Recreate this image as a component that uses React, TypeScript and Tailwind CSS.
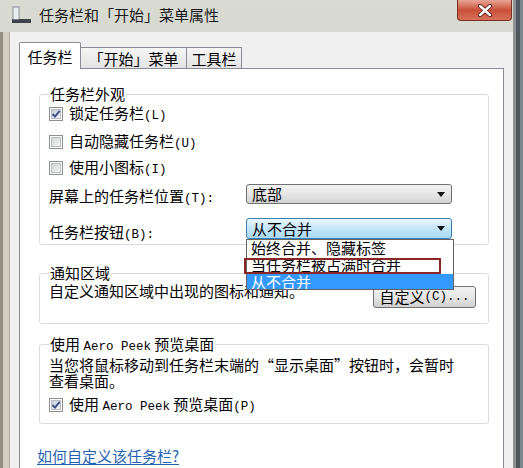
import React from 'react';

const CJK = '"Noto Sans CJK SC", "Noto Sans", sans-serif';

// Latin bits in the dialog render in a monospace face (SimSun-like half width)
const Mono: React.FC<{ children: React.ReactNode }> = ({ children }) => (
  <span className="font-['Liberation_Mono',monospace] text-[12.5px] leading-none">{children}</span>
);

const CheckBox: React.FC<{ checked?: boolean }> = ({ checked }) => (
  <svg width="14" height="14" viewBox="0 0 14 14" className="shrink-0">
    <defs>
      <linearGradient id={checked ? 'cbOn' : 'cbOff'} x1="0" y1="0" x2="1" y2="1">
        <stop offset="0" stopColor={checked ? '#c4cbd8' : '#cfd1d4'} />
        <stop offset="1" stopColor="#f7f7f7" />
      </linearGradient>
    </defs>
    <rect x="0.5" y="0.5" width="13" height="13" fill="#fff" stroke="#8e8f8f" />
    <rect x="2.5" y="2.5" width="9" height="9" fill={`url(#${checked ? 'cbOn' : 'cbOff'})`} stroke="#b9bcc1" />
    {checked && <path d="M3.5 7 L6 9.6 L10.6 3.8" fill="none" stroke="#3b4f8c" strokeWidth="1.9" />}
  </svg>
);

const Arrow: React.FC = () => (
  <svg width="8" height="5" viewBox="0 0 8 5" className="shrink-0">
    <path d="M0 0 H8 L4 5 Z" fill="#111" />
  </svg>
);

const CheckRow: React.FC<{ checked?: boolean; className?: string; children: React.ReactNode }> = ({
  checked,
  className,
  children,
}) => (
  <div className={`flex h-[16px] items-center gap-[6px] ${className ?? ''}`}>
    <CheckBox checked={checked} />
    <span className="leading-[16px] whitespace-nowrap">{children}</span>
  </div>
);

const Tab: React.FC<{ active?: boolean; width: string; children: React.ReactNode }> = ({ active, width, children }) =>
  active ? (
    <div
      className={`${width} h-[27px] border border-b-0 border-[#898c95] bg-white flex items-center justify-center pt-[1px] leading-[16px] rounded-t-[2px]`}
    >
      {children}
    </div>
  ) : (
    <div
      className={`${width} h-[22px] border border-l-0 border-[#898c95] bg-gradient-to-b from-[#f6f6f6] to-[#e3e3e3] flex items-center justify-center pt-[2px] leading-[16px]`}
    >
      {children}
    </div>
  );

export default function App() {
  return (
    <div
      className="w-[523px] h-[468px] overflow-hidden flex text-[15px] text-black"
      style={{ fontFamily: CJK }}
    >
      {/* window */}
      <div className="w-[513px] h-full flex flex-col bg-gradient-to-b from-[#d9dbd3] via-[#cfd3ca] to-[#c9ccc2]">
        {/* title bar */}
        <div className="h-[32px] flex items-start shrink-0">
          <div className="flex items-center h-[30px] pl-[12px] gap-[8px] flex-1">
            <svg width="19" height="18" viewBox="0 0 19 18">
              <rect x="1" y="1" width="6" height="13" fill="#e9eef2" stroke="#8a9096" />
              <rect x="0" y="13" width="19" height="4" fill="#3d4449" />
              <rect x="1" y="13" width="6" height="1" fill="#7a8086" />
            </svg>
            <span className="leading-[16px] text-[#1b1b1b] whitespace-nowrap">任务栏和「开始」菜单属性</span>
          </div>
          <div className="w-[55px] h-[21px] mr-[1px] rounded-b-[4px] border border-t-0 border-[#7a2f24] bg-gradient-to-b from-[#e6a595] via-[#c9503a] to-[#d8705a] flex items-center justify-center">
            <svg width="16" height="13" viewBox="0 0 16 13">
              <path d="M3 2 L13 11 M13 2 L3 11" stroke="#5a1e16" strokeWidth="4.2" strokeLinecap="round" />
              <path d="M3 2 L13 11 M13 2 L3 11" stroke="#ffffff" strokeWidth="2.4" strokeLinecap="round" />
            </svg>
          </div>
        </div>

        {/* frame + client */}
        <div className="flex-1 flex">
          <div className="w-[10px] border-l-[3px] border-[#928d82] bg-[#d3cfc0] border-r border-r-[#a9a9a1]" />
          <div className="flex-1 bg-[#f0f0f0] pt-[10px] pl-[9px] pr-[9px]">
            {/* tabs */}
            <div className="flex items-end relative z-10 -mb-px">
              <Tab active width="w-[62px]">任务栏</Tab>
              <Tab width="w-[106px]">「开始」菜单</Tab>
              <Tab width="w-[55px]">工具栏</Tab>
            </div>

            {/* tab panel */}
            <div className="h-[420px] border border-[#898c95] bg-white pt-[17px] pl-[19px] pr-[14px]">
              {/* 任务栏外观 */}
              <fieldset className="border border-[#d9dcdf] rounded-[3px] pl-[9px] pr-[12px] pt-[4px] pb-[5px]">
                <legend className="px-[1px] leading-[16px]">任务栏外观</legend>
                <CheckRow checked>
                  锁定任务栏<Mono>(L)</Mono>
                </CheckRow>
                <CheckRow className="mt-[12px]">
                  自动隐藏任务栏<Mono>(U)</Mono>
                </CheckRow>
                <CheckRow className="mt-[10px]">
                  使用小图标<Mono>(I)</Mono>
                </CheckRow>

                <div className="flex items-center h-[20px] mt-[8px]">
                  <span className="w-[197px] h-[16px] leading-[16px] mt-[4px] whitespace-nowrap">
                    屏幕上的任务栏位置<Mono>(T):</Mono>
                  </span>
                  <div className="w-[206px] h-[20px] border border-[#707070] rounded-[3px] bg-gradient-to-b from-[#f3f3f3] via-[#e6e6e6] to-[#d3d3d3] flex items-center justify-between pl-[5px] pr-[6px]">
                    <span className="leading-[16px]">底部</span>
                    <Arrow />
                  </div>
                </div>

                <div className="flex items-center h-[21px] mt-[14px]">
                  <span className="w-[197px] h-[16px] leading-[16px] mt-[6px] whitespace-nowrap">
                    任务栏按钮<Mono>(B):</Mono>
                  </span>
                  <div className="relative">
                    <div className="w-[206px] h-[21px] border border-[#3c7fb1] rounded-[3px] bg-gradient-to-b from-[#eaf6fd] via-[#c4e6fa] to-[#a9d9f3] flex items-center justify-between pl-[5px] pr-[6px]">
                      <span className="leading-[16px]">从不合并</span>
                      <Arrow />
                    </div>
                    {/* open list */}
                    <div className="absolute left-0 top-full w-[208px] border border-[#646464] bg-white z-20 leading-[16px]">
                      <div className="h-[17px] pl-[4px] whitespace-nowrap overflow-hidden">始终合并、隐藏标签</div>
                      <div className="h-[17px] pl-[4px] whitespace-nowrap relative">
                        当任务栏被占满时合并
                        <div className="absolute -left-[3px] top-[1px] w-[197px] h-[16px] border-2 border-[#8b2626]" />
                      </div>
                      <div className="h-[15px] pl-[4px] bg-[#3399ff] text-white whitespace-nowrap overflow-hidden leading-[15px]">
                        从不合并
                      </div>
                    </div>
                  </div>
                </div>
              </fieldset>

              {/* 通知区域 */}
              <fieldset className="mt-[20px] border border-[#d9dcdf] rounded-[3px] pl-[9px] pr-[12px] pt-[2px] pb-[15px]">
                <legend className="px-[1px] leading-[16px]">通知区域</legend>
                <div className="flex items-start justify-between">
                  <span className="leading-[16px] whitespace-nowrap">自定义通知区域中出现的图标和通知。</span>
                  <button className="mt-[3px] w-[103px] h-[22px] border border-[#707070] rounded-[3px] bg-gradient-to-b from-[#f3f3f3] via-[#e6e6e6] to-[#d0d0d0] flex items-center justify-center leading-[16px]">
                    自定义<Mono>(C)...</Mono>
                  </button>
                </div>
              </fieldset>

              {/* Aero Peek */}
              <fieldset className="mt-[12px] border border-[#d9dcdf] rounded-[3px] pl-[9px] pr-[12px] pt-[3px] pb-[10px]">
                <legend className="px-[1px] leading-[16px]">
                  使用 <Mono>Aero Peek</Mono> 预览桌面
                </legend>
                <p className="leading-[16px] whitespace-nowrap">
                  当您将鼠标移动到任务栏末端的“显示桌面”按钮时，会暂时
                  <br />
                  查看桌面。
                </p>
                <CheckRow checked className="mt-[8px]">
                  使用 <Mono>Aero Peek</Mono> 预览桌面<Mono>(P)</Mono>
                </CheckRow>
              </fieldset>

              <a className="block mt-[24px] -ml-[2px] leading-[16px] text-[#1f63b0] underline underline-offset-2 cursor-pointer w-max">
                如何自定义该任务栏?
              </a>
            </div>
          </div>
        </div>
      </div>

      {/* edge of whatever lies behind the window */}
      <div className="w-[10px] h-full flex">
        <div className="w-[3px] bg-[#8f9393]" />
        <div className="w-[4px] bg-[#4c585e]" />
        <div className="w-[3px] bg-[#7b888e]" />
      </div>
    </div>
  );
}
